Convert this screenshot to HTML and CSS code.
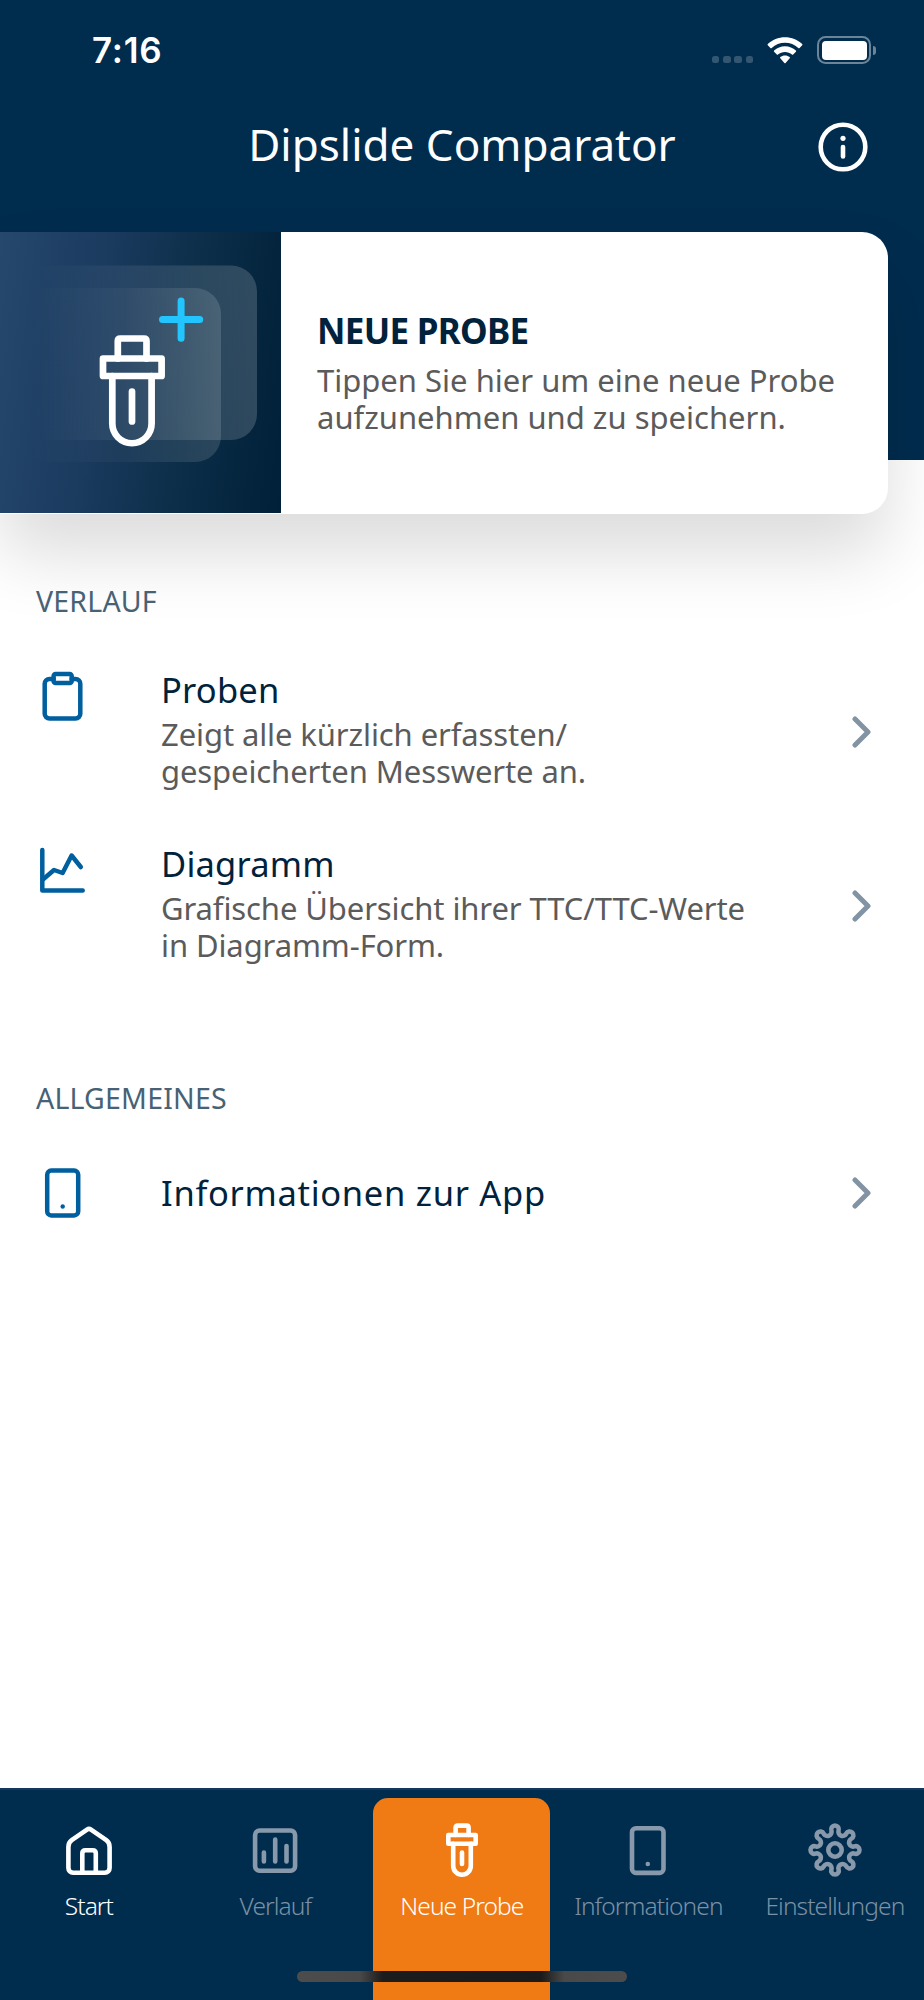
FILE: index.html
```html
<!DOCTYPE html>
<html lang="de">
<head>
    <meta charset="UTF-8">
    <meta name="viewport" content="width=device-width, initial-scale=1.0">
    <title>Dipslide Comparator</title>
    <link rel="stylesheet" href="styles.css">
</head>
<body>
    <header class="header">
        <div class="status-bar">
            <span class="time">7:16</span>
            <div class="status-icons">
                <div class="signal"><i></i><i></i><i></i><i></i></div>
                <svg class="wifi" width="36" height="27" viewBox="0 0 36 27" fill="#fff">
                    <path d="M18 0.3c6.6 0 12.700 2.500 17.200 6.700 .4 .4 .4 .9 0 1.300l-2.600 2.600c-.4 .4-.9 .4-1.300 0C27.700 7.600 23 5.700 18 5.700S8.300 7.600 4.700 10.900c-.4 .4-.9 .4-1.300 0L.8 8.300c-.4-.4-.4-.9 0-1.300C5.300 2.800 11.400 .3 18 .3z"/>
                    <path d="M18 9.300c4.200 0 8 1.600 10.900 4.200 .4 .4 .4 .9 0 1.300l-2.700 2.700c-.4 .4-.9 .4-1.200 0-1.900-1.600-4.300-2.600-7-2.600s-5.100 1-7 2.600c-.3 .4-.8 .4-1.200 0l-2.700-2.700c-.4-.4-.4-.9 0-1.300C10 10.900 13.800 9.300 18 9.300z"/>
                    <path d="M18 18.400c1.800 0 3.400 .6 4.700 1.700 .4 .4 .4 .9 0 1.200l-4.100 4.700c-.4 .4-.9 .4-1.200 0l-4.100-4.700c-.4-.3-.4-.8 0-1.200 1.300-1.100 2.900-1.700 4.700-1.700z"/>
                </svg>
                <div class="battery"><div class="battery-level"></div></div>
                <div class="battery-cap"></div>
            </div>
        </div>
        <div class="title-bar">
            <h1>Dipslide Comparator</h1>
            <svg class="info-icon" width="50" height="50" viewBox="0 0 50 50">
                <circle cx="25" cy="25" r="22.300" fill="none" stroke="#fff" stroke-width="4.600"/>
                <circle cx="25" cy="16.300" r="2.600" fill="#fff"/>
                <path d="M25 25v9.500" stroke="#fff" stroke-width="4.600" stroke-linecap="round"/>
            </svg>
        </div>
    </header>

    <!-- New sample card -->
    <a class="hero">
        <svg class="hero-image" width="281" height="281" viewBox="0 0 281 281" fill="none" stroke-linejoin="round" stroke-linecap="round">
            <defs>
                <linearGradient id="fade-back" gradientUnits="userSpaceOnUse" x1="40" y1="0" x2="257" y2="0">
                    <stop offset="0" stop-color="#fff" stop-opacity="0"/>
                    <stop offset="1" stop-color="#fff" stop-opacity="0.17"/>
                </linearGradient>
                <linearGradient id="fade-front" gradientUnits="userSpaceOnUse" x1="30" y1="0" x2="221" y2="0">
                    <stop offset="0" stop-color="#fff" stop-opacity="0"/>
                    <stop offset="0.5" stop-color="#fff" stop-opacity="0.04"/>
                    <stop offset="1" stop-color="#fff" stop-opacity="0.14"/>
                </linearGradient>
            </defs>
            <path d="M30 33.500h201a26 26 0 0 1 26 26V182a26 26 0 0 1-26 26H30z" fill="url(#fade-back)"/>
            <path d="M20 56h175a26 26 0 0 1 26 26v122a26 26 0 0 1-26 26H20z" fill="url(#fade-front)"/>
            <path d="M162.500 87.600h37.200M181.100 69v37.200" stroke="#22c5ff" stroke-width="7"/>
            <g stroke="#fff" stroke-width="6.700">
                <path d="M117.800 126.500V109q0-2.500 2.500-2.500h23.700q2.500 0 2.500 2.500v17.500"/>
                <path d="M103 126.500h58.600V144H103z"/>
                <path d="M112.300 144v47.600a19.650 19.650 0 0 0 39.300 0V144"/>
                <path d="M132 159.500v30"/>
            </g>
        </svg>
        <div class="hero-text">
            <h2>NEUE PROBE</h2>
            <p>Tippen Sie hier um eine neue Probe<br>aufzunehmen und zu speichern.</p>
        </div>
    </a>

    <main class="content">
        <section class="section">
            <h3>VERLAUF</h3>
            <a class="row">
                <svg class="row-icon" width="54" height="54" viewBox="0 0 54 54">
                    <path d="M17.600 9.900H13.500a4.800 4.800 0 0 0-4.800 4.800V44.700a4.800 4.800 0 0 0 4.800 4.800h26a4.800 4.800 0 0 0 4.800-4.800V14.700a4.800 4.800 0 0 0-4.800-4.800H35.700"/>
                    <rect x="17.600" y="5" width="18.100" height="9" rx="2"/>
                </svg>
                <div class="row-text">
                    <h4>Proben</h4>
                    <p>Zeigt alle kürzlich erfassten/<br>gespeicherten Messwerte an.</p>
                </div>
                <svg class="chevron" width="22" height="34" viewBox="0 0 22 34"><path d="M3 4l13 13L3 30"/></svg>
            </a>
            <a class="row">
                <svg class="row-icon" width="54" height="54" viewBox="0 0 54 54">
                    <path d="M6.300 7v40.600h40.400"/>
                    <path d="M7.500 36L18 27l8.600 3 9-17.500L44.800 24"/>
                </svg>
                <div class="row-text">
                    <h4>Diagramm</h4>
                    <p>Grafische Übersicht ihrer TTC/TTC-Werte<br>in Diagramm-Form.</p>
                </div>
                <svg class="chevron" width="22" height="34" viewBox="0 0 22 34"><path d="M3 4l13 13L3 30"/></svg>
            </a>
        </section>

        <section class="section">
            <h3>ALLGEMEINES</h3>
            <a class="row row-single">
                <svg class="row-icon" width="54" height="54" viewBox="0 0 54 54">
                    <rect x="11.200" y="4.600" width="31" height="44.800" rx="4"/>
                    <circle class="dot" cx="26.700" cy="40.500" r="2.200"/>
                </svg>
                <div class="row-text">
                    <h4>Informationen zur App</h4>
                </div>
                <svg class="chevron" width="22" height="34" viewBox="0 0 22 34"><path d="M3 4l13 13L3 30"/></svg>
            </a>
        </section>
    </main>

    <nav class="tab-bar">
        <a class="tab active">
            <svg width="56" height="56" viewBox="0 0 56 56">
                <path d="M7.400 25q0-4.500 3.300-6.800L26 7.600q2-1.400 4 0l15.300 10.600q3.300 2.300 3.300 6.800V46a4.700 4.700 0 0 1-4.700 4.700H12.100A4.700 4.700 0 0 1 7.400 46z"/>
                <path d="M21.300 50.700V31.500q0-3.200 3.200-3.200h7.100q3.200 0 3.200 3.200v19.200"/>
            </svg>
            <span>Start</span>
        </a>
        <a class="tab">
            <svg width="56" height="56" viewBox="0 0 56 56">
                <rect x="8.100" y="8.500" width="40" height="40.200" rx="4.500"/>
                <path d="M16.900 30.500v9M28.200 17.500v22M39.500 24v15.500"/>
            </svg>
            <span>Verlauf</span>
        </a>
        <a class="tab tab-new">
            <svg width="56" height="56" viewBox="0 0 56 56">
                <path d="M21.600 13V5.600q0-2 2-2h9q2 0 2 2V13"/>
                <path d="M14.300 13h27.400v8.700H14.300z"/>
                <path d="M19.200 21.700v22.200a8.800 8.800 0 0 0 17.600 0V21.700"/>
                <path d="M28 30.500v11.500"/>
            </svg>
            <span>Neue Probe</span>
        </a>
        <a class="tab">
            <svg width="56" height="56" viewBox="0 0 56 56">
                <rect x="12" y="6.300" width="31.500" height="44.600" rx="4"/>
                <circle class="dot" cx="27.800" cy="42" r="2.300"/>
            </svg>
            <span>Informationen</span>
        </a>
        <a class="tab">
            <svg width="56" height="56" viewBox="-28 -28 56 56">
                <path d="M-3.600-19.500A3.800 3.800 0 1 1 3.600-19.500A4.150 4.150 0 0 0 11.240-16.330A3.800 3.800 0 1 1 16.330-11.240A4.150 4.150 0 0 0 19.500-3.600A3.800 3.800 0 1 1 19.500 3.600A4.150 4.150 0 0 0 16.330 11.240A3.800 3.800 0 1 1 11.240 16.330A4.150 4.150 0 0 0 3.600 19.500A3.800 3.800 0 1 1-3.600 19.500A4.150 4.150 0 0 0-11.240 16.330A3.800 3.800 0 1 1-16.330 11.240A4.150 4.150 0 0 0-19.500 3.600A3.800 3.800 0 1 1-19.500-3.600A4.150 4.150 0 0 0-16.330-11.240A3.800 3.800 0 1 1-11.240-16.330A4.150 4.150 0 0 0-3.600-19.500z"/>
                <circle r="6.700"/>
            </svg>
            <span>Einstellungen</span>
        </a>
        <div class="home-indicator"></div>
    </nav>
</body>
</html>
```
FILE: styles.css
```css
* {
    box-sizing: border-box;
}
body {
    margin: 0;
    height: 2000px;
    display: flex;
    flex-direction: column;
    background-color: #fff;
    font-family: "Noto Sans", "Open Sans", sans-serif;
    overflow: hidden;
}
h1, h2, h3, h4, p {
    margin: 0;
    font-weight: 400;
    white-space: nowrap;
}
.header {
    flex: none;
    height: 459.5px;
    background-color: #002c4e;
    color: #fff;
}
.status-bar {
    height: 100px;
    padding: 0 48px 0 92px;
    display: flex;
    justify-content: space-between;
    align-items: center;
}
.time {
    font-family: Inter, sans-serif;
    font-size: 35px;
    font-weight: 600;
    letter-spacing: 0.8px;
}
.status-icons {
    display: flex;
    align-items: center;
}
.signal {
    display: flex;
    gap: 3.7px;
    margin: 19px 14px 0 0;
}
.signal i {
    width: 7.5px;
    height: 7.5px;
    border-radius: 2.5px;
    background-color: #335671;
}
.battery {
    width: 54px;
    height: 28px;
    margin-left: 14px;
    padding: 2.5px;
    border: 2px solid #6b8498;
    border-radius: 8.5px;
}
.battery-level {
    height: 100%;
    border-radius: 4px;
    background-color: #fff;
}
.battery-cap {
    width: 3px;
    height: 9px;
    margin-left: 2px;
    border-radius: 0 4px 4px 0;
    background-color: #6b8498;
}
.title-bar {
    height: 88px;
    padding: 0 55.5px;
    display: grid;
    grid-template-columns: 50px 1fr 50px;
    align-items: center;
}
.title-bar h1 {
    grid-column: 2;
    font-size: 44px;
    text-align: center;
}
.info-icon {
    margin: 6px 0 0 -0.5px;
}

/* Card overlapping the header */
.hero {
    flex: none;
    position: relative;
    display: flex;
    width: 888px;
    height: 281.5px;
    margin-top: -227.5px;
    border-radius: 0 26px 26px 0;
    background-color: #fff;
    box-shadow: 0 40px 70px rgba(0, 0, 0, 0.14);
}
.hero-image {
    flex: none;
    background: linear-gradient(97deg, #25486c 0%, #1a3a5e 36%, #0c2e48 66%, #001f38 100%);
}
.hero-text {
    padding: 77px 0 0 36px;
}
.hero-text h2 {
    font-size: 35px;
    font-weight: 700;
    line-height: 44px;
    letter-spacing: -0.7px;
    color: #00223c;
}
.hero-text p {
    margin-top: 9px;
}
.hero-text p,
.row-text p {
    font-size: 31px;
    line-height: 36.5px;
    color: #5b5b5b;
}

.content {
    flex: 1;
    padding: 67.5px 50px 0 36px;
    /* keeps the text above the card's shadow */
    position: relative;
}
.section {
    margin-bottom: 85.4px;
}
.section h3 {
    margin-bottom: 23.6px;
    font-size: 28.5px;
    line-height: 40px;
    letter-spacing: 0.2px;
    color: #486275;
}
.row {
    display: flex;
    height: 174px;
}
.row-icon {
    margin: 24px 71px 0 0;
    fill: none;
    stroke: #005f9f;
    stroke-width: 4.5;
    stroke-linecap: round;
    stroke-linejoin: round;
}
.row-icon .dot {
    fill: #005f9f;
    stroke: none;
}
.row-text {
    flex: 1;
    padding-top: 23.5px;
}
.row-text h4 {
    font-size: 34.5px;
    line-height: 44px;
    letter-spacing: 0.2px;
    color: #00223c;
}
.row-text p {
    margin-top: 4px;
    letter-spacing: -0.1px;
}
.chevron {
    align-self: center;
    fill: none;
    stroke: #8294a3;
    stroke-width: 5;
    stroke-linecap: round;
    stroke-linejoin: round;
}
.row-single {
    height: 103px;
    align-items: center;
}
.row-single .row-icon {
    margin-top: 0;
}
.row-single .row-text {
    padding: 0;
}
.row-single h4 {
    letter-spacing: 0.7px;
}

/* Bottom navigation */
.tab-bar {
    flex: none;
    position: relative;
    display: grid;
    grid-template-columns: repeat(5, 177px);
    gap: 9.5px;
    height: 212.5px;
    padding: 8.5px 0 0 0.4px;
    border-top: 2px solid #16365f;
    background-color: #002c4e;
}
.tab {
    display: flex;
    flex-direction: column;
    align-items: center;
    padding-top: 24px;
    border-radius: 15px 15px 0 0;
    color: #7b90a2;
}
.tab svg {
    fill: none;
    stroke: #8799aa;
    stroke-width: 4.6;
    stroke-linecap: round;
    stroke-linejoin: round;
}
.tab .dot {
    fill: #8799aa;
    stroke: none;
}
.tab span {
    margin-top: 11px;
    font-size: 24.5px;
    font-weight: 300;
    line-height: 34px;
    letter-spacing: -0.9px;
    white-space: nowrap;
}
.tab.active,
.tab-new {
    color: #fff;
}
.tab.active svg,
.tab-new svg {
    stroke: #fff;
}
.tab-new {
    background-color: #f07a14;
}
.home-indicator {
    position: absolute;
    left: 297px;
    bottom: 18px;
    width: 330px;
    height: 11px;
    border-radius: 6px;
    background: linear-gradient(90deg, #4c4c4c 0%, #494949 19%, #1c1c1c 26%, #1a1a1a 74%, #494949 81%, #4c4c4c 100%);
}
```
